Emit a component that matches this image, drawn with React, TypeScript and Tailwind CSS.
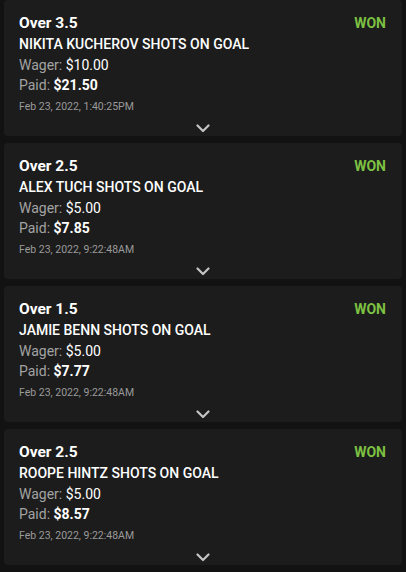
import React from "react";

const bets = [
  { line: "Over 3.5", title: "NIKITA KUCHEROV SHOTS ON GOAL", wager: "$10.00", paid: "$21.50", date: "Feb 23, 2022, 1:40:25PM" },
  { line: "Over 2.5", title: "ALEX TUCH SHOTS ON GOAL", wager: "$5.00", paid: "$7.85", date: "Feb 23, 2022, 9:22:48AM" },
  { line: "Over 1.5", title: "JAMIE BENN SHOTS ON GOAL", wager: "$5.00", paid: "$7.77", date: "Feb 23, 2022, 9:22:48AM" },
  { line: "Over 2.5", title: "ROOPE HINTZ SHOTS ON GOAL", wager: "$5.00", paid: "$8.57", date: "Feb 23, 2022, 9:22:48AM" },
];

function Chevron() {
  return (
    <svg width="14" height="9" viewBox="0 0 14 9" fill="none">
      <path d="M1.5 1.5 L7 7 L12.5 1.5" stroke="#c4c4c4" strokeWidth="2.2" strokeLinecap="round" strokeLinejoin="round" />
    </svg>
  );
}

export default function App() {
  return (
    <div className="w-[406px] h-[572px] bg-[#121212] flex flex-col gap-[7px] px-[4px] pb-[7px]" style={{ fontFamily: "Roboto, 'Noto Sans', sans-serif" }}>
      {bets.map((b, i) => (
        <div key={i} className="h-[136px] bg-[#1c1c1c] rounded-[4px] flex flex-col pl-[15px] pr-[15px] pt-[13px] relative">
          <div className="flex justify-between items-start">
            <div className="text-white text-[15.5px] font-bold leading-[20px]">{b.line}</div>
            <div className="text-[#7dc142] text-[14px] font-bold leading-[20px] mr-[1px]">WON</div>
          </div>
          <div className="text-white text-[14px] font-medium leading-[20px] mt-[1px]">{b.title}</div>
          <div className="text-[14px] leading-[20px] mt-[1px]">
            <span className="text-[#a3a3a3]">Wager: </span>
            <span className="text-white">{b.wager}</span>
          </div>
          <div className="text-[14px] leading-[20px]">
            <span className="text-[#a3a3a3]">Paid: </span>
            <span className="text-white font-bold">{b.paid}</span>
          </div>
          <div className="text-[#9a9a9a] text-[10.5px] leading-[14px] mt-[5px]">{b.date}</div>
          <div className="flex justify-center mt-[10px]">
            <Chevron />
          </div>
        </div>
      ))}
    </div>
  );
}
